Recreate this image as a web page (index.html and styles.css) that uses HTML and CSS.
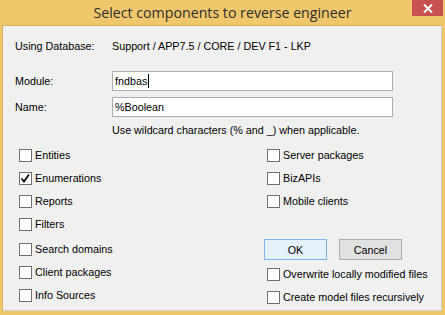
FILE: index.html
```html
<!DOCTYPE html>
<html lang="en">
<head>
  <meta charset="UTF-8">
  <title>Select components to reverse engineer</title>
  <link rel="stylesheet" href="styles.css">
</head>
<body>

<div class="window">
  <div class="titlebar">
    <span></span>
    <h1 class="title">Select components to reverse engineer</h1>
    <button class="close" aria-label="Close">
      <svg width="10" height="9" viewBox="0 0 10 9"><path d="M1 0.5 L9 8.5 M9 0.5 L1 8.5" stroke="#fff" stroke-width="2"/></svg>
    </button>
  </div>

  <div class="client">
    <div class="info-row">
      <span class="label">Using Database:</span>
      <span>Support / APP7.5 / CORE / DEV F1 - LKP</span>
    </div>

    <div class="field-row">
      <span class="label">Module:</span>
      <div class="field">fndbas<span class="caret"></span></div>
    </div>
    <div class="field-row name-row">
      <span class="label">Name:</span>
      <div class="field">%Boolean</div>
    </div>
    <p class="hint">Use wildcard characters (% and _) when applicable.</p>

    <div class="options">
      <div class="col">
        <label class="check"><span class="box"></span>Entities</label>
        <label class="check"><span class="box"><svg width="11" height="11" viewBox="0 0 11 11"><path d="M1.5 5.5 L4 8.5 L9 1.5" fill="none" stroke="#000" stroke-width="1.7"/></svg></span>Enumerations</label>
        <label class="check"><span class="box"></span>Reports</label>
        <label class="check"><span class="box"></span>Filters</label>
        <label class="check group-start"><span class="box"></span>Search domains</label>
        <label class="check"><span class="box"></span>Client packages</label>
        <label class="check"><span class="box"></span>Info Sources</label>
      </div>
      <div class="col">
        <label class="check"><span class="box"></span>Server packages</label>
        <label class="check"><span class="box"></span>BizAPIs</label>
        <label class="check"><span class="box"></span>Mobile clients</label>
        <div class="buttons">
          <button class="btn btn-default">OK</button>
          <button class="btn">Cancel</button>
        </div>
        <label class="check"><span class="box"></span>Overwrite locally modified files</label>
        <label class="check"><span class="box"></span>Create model files recursively</label>
      </div>
    </div>
  </div>
</div>

</body>
</html>
```

FILE: styles.css
```css
body {
  margin: 0;
  font-family: "Liberation Sans", Arial, sans-serif;
  font-size: 10.75px;
  color: #000;
}

.window {
  width: 445px;
  height: 315px;
  background: #f0c86b;
  display: flex;
  flex-direction: column;
}

.titlebar {
  height: 25px;
  display: grid;
  grid-template-columns: 1fr auto 1fr;
  align-items: center;
}
.title {
  margin: 0;
  font-family: "Open Sans", "Noto Sans", sans-serif;
  font-weight: normal;
  font-size: 14.2px;
  color: #2e2e2e;
  line-height: 25px;
}
.close {
  justify-self: end;
  align-self: start;
  margin-right: 2px;
  width: 31px;
  height: 16px;
  border: 0;
  padding: 0;
  background: #c75050;
  display: flex;
  align-items: center;
  justify-content: center;
}

.client {
  flex: 1;
  margin: 0 3px 4px 2px;
  background: #f0f0f0;
  border: 1px solid;
  border-color: #d6b25e #cdcdcd #cdcdcd #d6b25e;
  padding: 13px 0 0 12px;
}

.info-row {
  display: grid;
  grid-template-columns: 97px auto;
  line-height: 14px;
}

.field-row {
  display: grid;
  grid-template-columns: 97px 281px;
  align-items: center;
  margin-top: 18px;
}
.name-row {
  margin-top: 6px;
}
.field {
  box-sizing: border-box;
  height: 20px;
  border: 1px solid #abadb3;
  background: #fff;
  padding: 0 2px;
  line-height: 18px;
  display: flex;
  align-items: center;
}
.caret {
  display: inline-block;
  width: 1px;
  height: 14px;
  background: #000;
  margin-left: 1px;
}

.hint {
  margin: 6px 0 0 97px;
  line-height: 14px;
}

.options {
  display: grid;
  grid-template-columns: 248px auto;
  margin-top: 12px;
  padding-left: 4px;
}
.col {
  display: flex;
  flex-direction: column;
  gap: 10px;
}
.check {
  display: flex;
  align-items: center;
  gap: 3px;
  height: 13px;
  line-height: 13px;
  white-space: nowrap;
}
.box {
  box-sizing: border-box;
  width: 13px;
  height: 13px;
  border: 1px solid #707070;
  background: #fff;
  display: flex;
  align-items: center;
  justify-content: center;
}
.group-start {
  margin-top: 2px;
}

.buttons {
  display: flex;
  gap: 12px;
  margin: 21px 0 -2px -3px;
}
.btn {
  box-sizing: border-box;
  width: 63px;
  height: 21px;
  border: 1px solid #adadad;
  background: #e1e1e1;
  font-family: "Liberation Sans", Arial, sans-serif;
  font-size: 10.75px;
  color: #000;
  padding: 0;
}
.btn-default {
  border-color: #7eb4ea;
  background: #e5f1fb;
}
```
